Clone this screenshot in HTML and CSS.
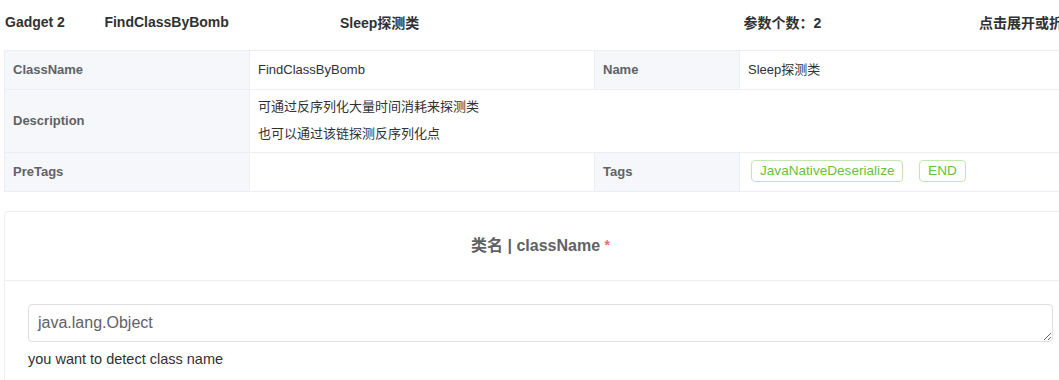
FILE: index.html
```html
<!DOCTYPE html>
<html lang="zh-CN">
<head>
  <meta charset="UTF-8" />
  <title>Gadget 2</title>
  <link rel="stylesheet" href="styles.css">
</head>
<body>
  <div class="page">

    <div class="gadget-head">
      <span class="col-no">Gadget 2</span>
      <span class="col-class">FindClassByBomb</span>
      <span class="col-name">Sleep探测类</span>
      <span class="col-count">参数个数：2</span>
      <span class="col-toggle">点击展开或折叠</span>
    </div>

    <table class="desc-table">
      <tr>
        <th class="w-label1">ClassName</th>
        <td class="w-value1">FindClassByBomb</td>
        <th class="w-label2">Name</th>
        <td>Sleep探测类</td>
      </tr>
      <tr>
        <th>Description</th>
        <td colspan="3" class="desc-cell">
          <div class="desc-line">可通过反序列化大量时间消耗来探测类</div>
          <div class="desc-line">也可以通过该链探测反序列化点</div>
        </td>
      </tr>
      <tr>
        <th>PreTags</th>
        <td></td>
        <th>Tags</th>
        <td class="tag-cell">
          <span class="tag">JavaNativeDeserialize</span>
          <span class="tag">END</span>
        </td>
      </tr>
    </table>

    <div class="param-card">
      <div class="param-header">
        类名 | className <span class="required">*</span>
      </div>
      <div class="param-body">
        <textarea class="param-input" rows="1">java.lang.Object</textarea>
        <div class="param-help">you want to detect class name</div>
      </div>
    </div>

  </div>
</body>
</html>
```

FILE: styles.css
```css
body {
  margin: 0;
  background: #fff;
  font-family: "Liberation Sans", Arial, "Noto Sans CJK SC", sans-serif;
  color: #606266;
  overflow: hidden;
}

.page {
  width: 1073px;
  padding-left: 4px;
}

.gadget-head {
  display: flex;
  height: 43px;
  align-items: center;
  font-size: 14px;
  font-weight: bold;
  color: #303133;
  white-space: nowrap;
  padding-left: 1px;
  margin-bottom: 7px;
}
.col-no { width: 100px; }
.col-class { width: 237px; }
.col-name { width: 406px; }
.col-count { width: 237px; }

.desc-table {
  width: 100%;
  border-collapse: collapse;
  font-size: 14px;
}
.desc-table th,
.desc-table td {
  border: 1px solid #ebeef5;
  padding: 8px;
  text-align: left;
  height: 22px;
  line-height: 22px;
}
.desc-table th {
  background: #f5f7fa;
  color: #606266;
  font-weight: bold;
  font-size: 13px;
}
.desc-table td {
  color: #303133;
  font-size: 13px;
}
.w-label1 { width: 228px; }
.w-value1 { width: 328px; }
.w-label2 { width: 128px; }

.desc-cell {
  padding: 3px 8px 5px !important;
}
.desc-line {
  line-height: 27px;
}

.tag-cell {
  padding: 6px 8px 8px 11px !important;
}
.tag {
  display: inline-block;
  height: 20px;
  line-height: 20px;
  padding: 0 8px;
  margin-right: 12px;
  border: 1px solid #c2e7b0;
  border-radius: 4px;
  color: #67c23a;
  font-size: 13.6px;
}

.param-card {
  margin-top: 19px;
  border: 1px solid #ebeef5;
  border-radius: 4px;
}
.param-header {
  height: 68px;
  line-height: 68px;
  text-align: center;
  font-size: 16px;
  font-weight: bold;
  color: #606266;
  border-bottom: 1px solid #ebeef5;
}
.required {
  color: #f56c6c;
  font-size: 14px;
  vertical-align: top;
  position: relative;
  top: -1px;
}
.param-body {
  padding: 23px;
}
.param-input {
  display: block;
  box-sizing: border-box;
  width: 100%;
  height: 38px;
  padding: 6px 9px;
  border: 1px solid #dcdfe6;
  border-radius: 4px;
  font-family: "Liberation Sans", Arial, sans-serif;
  font-size: 16px;
  line-height: 24px;
  color: #606266;
  resize: vertical;
}
.param-help {
  margin-top: 5px;
  line-height: 24px;
  font-size: 14.5px;
  color: #303133;
}
```
